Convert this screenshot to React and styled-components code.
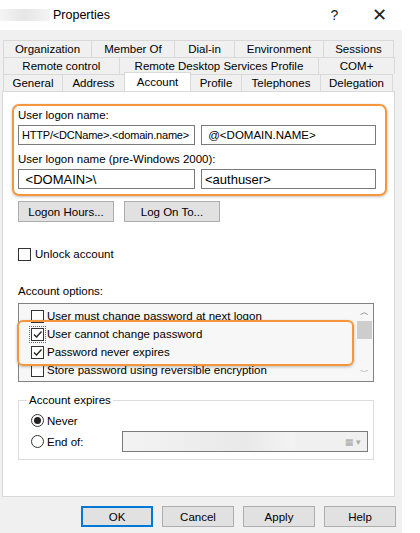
import React from "react";
import styled, { createGlobalStyle } from "styled-components";

const G = createGlobalStyle`
  body{margin:0;background:#fff;font-family:"Liberation Sans",Arial,sans-serif;font-size:11.5px;color:#000;}
  *{box-sizing:border-box;}
`;
const Win = styled.div`width:402px;height:533px;background:#f0f0f0;display:flex;flex-direction:column;`;
const Title = styled.div`height:30px;background:#fff;display:flex;align-items:center;padding-left:0;`;
const Blur = styled.div`width:50px;height:12px;background:linear-gradient(90deg,#f4f4f4,#e6e6e6,#f4f4f4);margin-right:3px;`;
const TitleText = styled.div`font-size:12.5px;flex:1;`;
const TIcon = styled.div`width:45px;text-align:center;font-size:14px;color:#222;`;
const Tabs = styled.div`margin:10px 7px 0 4px;display:flex;flex-direction:column;`;
const TabRow = styled.div`display:flex;height:17px;`;
const Tab = styled.div`
  width:${p=>p.w}px;border:1px solid #d9d9d9;border-bottom:none;margin-left:-1px;
  display:flex;align-items:center;justify-content:center;background:${p=>p.sel?"#fff":"#f0f0f0"};
  ${p=>p.sel?"height:19px;margin-top:-2px;position:relative;z-index:1;border-color:#d9d9d9;":""}
`;
const Panel = styled.div`margin:0 7px 0 2px;height:406px;background:#fff;border:1px solid #d9d9d9;padding:12px 0 0 9px;display:flex;flex-direction:column;`;
const Hi = styled.div`border:2px solid #f5963a;border-radius:7px;box-shadow:0 1px 3px rgba(0,0,0,.25);
  width:${p=>p.w}px;padding:${p=>p.pad};`;
const Label = styled.div`margin:${p=>p.m||"0"};line-height:13px;`;
const InRow = styled.div`display:flex;gap:6px;margin-top:${p=>p.mt||3}px;`;
const Input = styled.div`width:${p=>p.w}px;height:20px;border:1px solid #7a7a7a;padding:0 3px;display:flex;align-items:center;
  font-size:${p=>p.fs||11.5}px;letter-spacing:${p=>p.ls||0}px;white-space:nowrap;overflow:hidden;background:#fff;`;
const BtnRow = styled.div`display:flex;gap:${p=>p.gap}px;margin:${p=>p.m};`;
const Btn = styled.div`width:${p=>p.w}px;height:21px;background:#e1e1e1;border:1px solid ${p=>p.def?"#0078d7":"#adadad"};
  ${p=>p.def?"box-shadow:inset 0 0 0 1px #0078d7;":""}display:flex;align-items:center;justify-content:center;`;
const Check = styled.div`display:flex;align-items:center;gap:4px;height:18px;margin:${p=>p.m||0};`;
const Box = styled.div`width:13px;height:13px;flex-shrink:0;border:1px solid #333;background:#fff;display:flex;align-items:center;justify-content:center;
  ${p=>p.dot?"outline:1px dotted #666;outline-offset:1px;":""}`;
const List = styled.div`width:356px;height:79px;border:1px solid #828282;margin-top:5px;display:flex;position:relative;background:#f7f7f7;`;
const Items = styled.div`flex:1;padding:3px 0 0 12px;display:flex;flex-direction:column;overflow:hidden;`;
const Item = styled.div`display:flex;align-items:center;gap:3px;height:18px;flex-shrink:0;white-space:nowrap;`;
const Scroll = styled.div`width:17px;display:flex;flex-direction:column;align-items:center;justify-content:space-between;font-size:9px;color:#555;padding:2px 0;position:relative;`;
const Thumb = styled.div`position:absolute;top:17px;left:1px;width:15px;height:18px;background:#cdcdcd;`;
const Overlay = styled.div`position:absolute;left:-2px;top:16px;width:337px;height:46px;border:2px solid #f5963a;border-radius:6px;box-shadow:0 1px 3px rgba(0,0,0,.25);`;
const Group = styled.fieldset`width:356px;height:66px;border:1px solid #dcdcdc;margin:12px 0 0 0;padding:4px 0 0 12px;`;
const Legend = styled.legend`padding:0 2px;margin-left:-4px;`;
const Radio = styled.div`width:13px;height:13px;flex-shrink:0;border-radius:50%;border:1px solid #333;background:#fff;display:flex;align-items:center;justify-content:center;`;
const Dot = styled.div`width:7px;height:7px;border-radius:50%;background:#222;`;
const RRow = styled.div`display:flex;align-items:center;gap:3px;height:21px;white-space:nowrap;`;
const Date = styled.div`margin-left:36px;flex-shrink:0;width:246px;height:21px;border:1px solid #7a7a7a;display:flex;align-items:center;justify-content:flex-end;padding-right:6px;
  background:linear-gradient(90deg,#f3f3f3 0,#e9e9e9 50%,#f3f3f3 70%,#f0f0f0 71%);color:#aaa;font-size:9px;gap:2px;`;

const Tick = () => (<svg width="11" height="11" viewBox="0 0 11 11"><path d="M2 5.5 L4.5 8 L9.5 2.5" fill="none" stroke="#222" strokeWidth="1.3"/></svg>);

export default function App(){
  const r1=[["Organization",89],["Member Of",84],["Dial-in",61],["Environment",90],["Sessions",71]];
  const r2=[["Remote control",117],["Remote Desktop Services Profile",201],["COM+",77]];
  const r3=[["General",60],["Address",63],["Account",67,1],["Profile",52],["Telephones",80],["Delegation",73]];
  return (<><G/><Win>
    <Title><Blur/><TitleText>Properties</TitleText><TIcon>?</TIcon><TIcon style={{fontSize:18}}>✕</TIcon></Title>
    <Tabs>
      {[r1,r2,r3].map((r,i)=>(<TabRow key={i}>{r.map(([t,w,s])=>(<Tab key={t} w={w} sel={s}>{t}</Tab>))}</TabRow>))}
    </Tabs>
    <Panel>
      <Hi w={375} pad="3px 0 5px 4px">
        <Label>User logon name:</Label>
        <InRow><Input w={177} fs={11} ls={-0.2}>HTTP/&lt;DCName&gt;.&lt;domain.name&gt;</Input><Input w={175}>&nbsp;@&lt;DOMAIN.NAME&gt;</Input></InRow>
        <Label m="8px 0 0">User logon name (pre-Windows 2000):</Label>
        <InRow mt={3}><Input w={177} fs={13}>&nbsp;&lt;DOMAIN&gt;\</Input><Input w={175} fs={13}>&lt;authuser&gt;</Input></InRow>
      </Hi>
      <BtnRow gap={10} m="5px 0 0 6px"><Btn w={96}>Logon Hours...</Btn><Btn w={96}>Log On To...</Btn></BtnRow>
      <Check m="23px 0 0 6px"><Box/>Unlock account</Check>
      <Label m="22px 0 0 6px">Account options:</Label>
      <div style={{marginLeft:6}}>
      <List>
        <Items>
          <Item><Box/>User must change password at next logon</Item>
          <Item><Box dot><Tick/></Box>User cannot change password</Item>
          <Item><Box><Tick/></Box>Password never expires</Item>
          <Item><Box/>Store password using reversible encryption</Item>
        </Items>
        <Scroll><span>︿</span><Thumb/><span>﹀</span></Scroll>
        <Overlay/>
      </List>
      <Group>
        <Legend>Account expires</Legend>
        <RRow><Radio><Dot/></Radio>Never</RRow>
        <RRow><Radio/>End of:<Date>▦ ▾</Date></RRow>
      </Group>
      </div>
    </Panel>
    <BtnRow gap={9} m="9px 0 0 81px"><Btn w={72} def>OK</Btn><Btn w={72}>Cancel</Btn><Btn w={72}>Apply</Btn><Btn w={72}>Help</Btn></BtnRow>
  </Win></>);
}
